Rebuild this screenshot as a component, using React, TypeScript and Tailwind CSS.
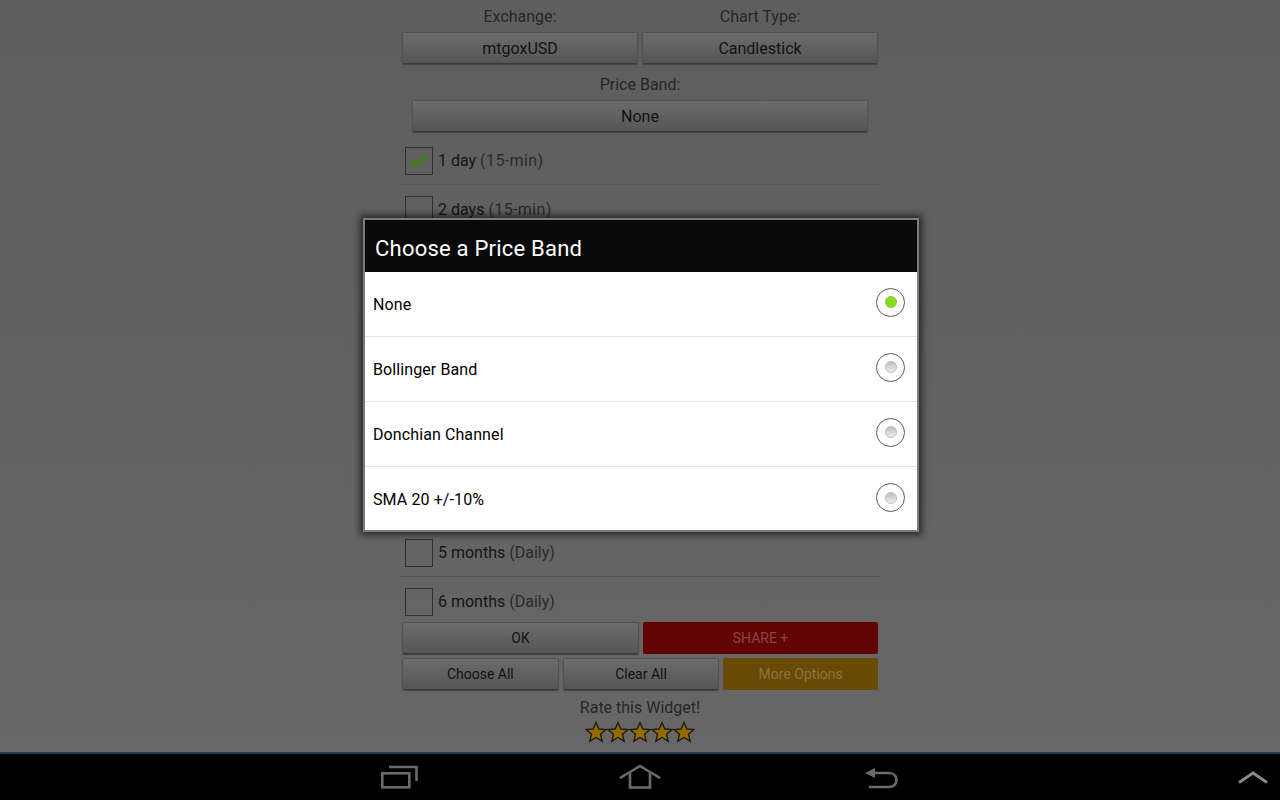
const ranges = [
  { label: "1 day", note: "(15-min)", checked: true },
  { label: "2 days", note: "(15-min)", checked: false },
  { label: "5 days", note: "(Hourly)", checked: true },
  { label: "10 days", note: "(Hourly)", checked: false },
  { label: "1 month", note: "(Daily)", checked: false },
  { label: "2 months", note: "(Daily)", checked: false },
  { label: "3 months", note: "(Daily)", checked: false },
  { label: "4 months", note: "(Daily)", checked: false },
  { label: "5 months", note: "(Daily)", checked: false },
  { label: "6 months", note: "(Daily)", checked: false },
];

const bands = ["None", "Bollinger Band", "Donchian Channel", "SMA 20 +/-10%"];

function GrayButton({ text, className }: { text: string; className: string }) {
  return (
    <div
      className={`flex items-center justify-center rounded-[2px] border border-[#525252] border-b-[#383838] bg-gradient-to-b from-[#6c6c6c] to-[#565656] text-[#121212] shadow-[0_1px_1px_#444444] ${className}`}
    >
      {text}
    </div>
  );
}

function RangeRow({ label, note, checked, last }: { label: string; note: string; checked: boolean; last: boolean }) {
  return (
    <div className={`flex h-[49px] items-center px-[5px] ${last ? "pt-[1px]" : "border-b border-[#585858] pt-[2px]"}`}>
      <div className="flex h-[28px] w-[28px] items-center justify-center border border-[#303030]">
        {checked && (
          <svg width="22" height="18" viewBox="0 0 22 18" fill="none" stroke="#467c1a" strokeWidth="4">
            <path d="M3.5 9 L8.5 13.5 L19.5 3.5" />
          </svg>
        )}
      </div>
      <span className="ml-[5px] text-[16px] text-[#141414]">
        {label} <span className={note === "(15-min)" ? "tracking-[0.4px] text-[#2a2a2a]" : "text-[#2a2a2a]"}>{note}</span>
      </span>
    </div>
  );
}

function Star() {
  return (
    <svg width="22" height="22" viewBox="0 0 22 22">
      <path
        d="M11 1.5 L13.8 8 L20.8 8.6 L15.5 13.2 L17.1 20.2 L11 16.5 L4.9 20.2 L6.5 13.2 L1.2 8.6 L8.2 8 Z"
        fill="#946c06"
        stroke="#241c08"
        strokeWidth="1.4"
      />
    </svg>
  );
}

function Radio({ on }: { on: boolean }) {
  return (
    <div className="flex h-[29px] w-[29px] items-center justify-center rounded-full border border-[#5a5a5a] bg-white">
      <div
        className={
          on
            ? "h-[12px] w-[12px] rounded-full border border-[#8cc63c] bg-[#84dc1c]"
            : "h-[12px] w-[12px] rounded-full border border-[#bcbcbc] bg-gradient-to-b from-[#bebebe] to-[#eeeeee]"
        }
      />
    </div>
  );
}

export default function App() {
  return (
    <div className="relative flex h-[800px] w-[1280px] flex-col overflow-hidden bg-black font-['Roboto',sans-serif]">
      <main className="h-[752px] overflow-hidden bg-gradient-to-b from-[#5e5e5e] to-[#676767]">
        <div className="mx-auto w-[480px] px-[2px]">
          <div className="flex gap-[4px] text-[16px] text-[#262626]">
            <div className="flex-1">
              <div className="flex h-[32px] items-center justify-center pt-[2px]">Exchange:</div>
              <GrayButton text="mtgoxUSD" className="h-[32px] pt-[2px]" />
            </div>
            <div className="flex-1">
              <div className="flex h-[32px] items-center justify-center pt-[2px]">Chart Type:</div>
              <GrayButton text="Candlestick" className="h-[32px] pt-[2px]" />
            </div>
          </div>
          <div className="flex h-[36px] items-center justify-center pt-[6px] text-[16px] text-[#262626]">Price Band:</div>
          <GrayButton text="None" className="mx-[10px] h-[32px] pt-[2px] text-[16px]" />
          <div className="-mx-[2px] mt-[4px]">
            {ranges.map((r, i) => (
              <RangeRow key={r.label} {...r} last={i === ranges.length - 1} />
            ))}
          </div>
          <div className="mt-[-4px] flex gap-[4px] text-[14px]">
            <GrayButton text="OK" className="h-[32px] flex-1" />
            <div className="flex h-[32px] flex-1 items-center justify-center rounded-[2px] bg-[#620404] text-[#8c4448]">SHARE +</div>
          </div>
          <div className="mt-[4px] flex gap-[4px] text-[14px]">
            <GrayButton text="Choose All" className="h-[32px] flex-1" />
            <GrayButton text="Clear All" className="h-[32px] flex-1" />
            <div className="flex h-[32px] flex-1 items-center justify-center rounded-[2px] bg-[#684a04] text-[#8a763c]">More Options</div>
          </div>
          <div className="mt-[6px] text-center text-[16px] leading-[24px] text-[#262626]">Rate this Widget!</div>
          <div className="mt-[1px] flex justify-center">
            <Star />
            <Star />
            <Star />
            <Star />
            <Star />
          </div>
        </div>
      </main>

      <nav className="flex h-[48px] items-center border-t-2 border-[#1b3f50] bg-black pl-[381px] pr-[12px]">
        <svg width="38" height="26" viewBox="0 0 38 26" fill="none" stroke="#6a6a6a" strokeWidth="2.6">
          <rect x="1.3" y="9.3" width="27" height="14" />
          <path d="M8 3 H35.5 V17" />
        </svg>
        <svg className="ml-[200px]" width="42" height="26" viewBox="0 0 42 26" fill="none" stroke="#6a6a6a" strokeWidth="2.6">
          <path d="M1 14 L21 2 L41 14" />
          <path d="M11 9 V23.5 H31 V9" />
        </svg>
        <svg className="ml-[204px]" width="34" height="26" viewBox="0 0 34 26" fill="none" stroke="#6a6a6a" strokeWidth="2.6">
          <path d="M7 9 H24 C34 9 34 23 24 23 H4" />
          <path d="M0 9 L10 4 V14 Z" fill="#6a6a6a" stroke="none" />
        </svg>
        <svg className="ml-auto" width="30" height="14" viewBox="0 0 30 14" fill="none" stroke="#8a8a8a" strokeWidth="3">
          <path d="M1 12.5 L15 3 L29 12.5" />
        </svg>
      </nav>

      {/* dialog sits over the page */}
      <div className="absolute inset-x-0 top-0 flex h-[750px] items-center justify-center pl-[2px]">
        <div className="w-[556px] border-2 border-[#7c7c7c] bg-white shadow-[0_0_7px_3px_rgba(0,0,0,0.6)]">
          <div className="flex h-[52px] items-center bg-black/[0.96] px-[10px] pt-[4px] text-[22px] tracking-[0.22px] text-white">Choose a Price Band</div>
          {bands.map((b, i) => (
            <div
              key={b}
              className={`flex items-center justify-between pl-[8px] pr-[12px] ${i < 3 ? "h-[65px] border-b border-[#e6e6e6]" : "h-[63px]"}`}
            >
              <span className="pt-[2px] text-[16px] tracking-[0.1px] text-black">{b}</span>
              <div className={i < 3 ? "-mt-[4px]" : "-mt-[2px]"}>
                <Radio on={i === 0} />
              </div>
            </div>
          ))}
        </div>
      </div>
    </div>
  );
}
